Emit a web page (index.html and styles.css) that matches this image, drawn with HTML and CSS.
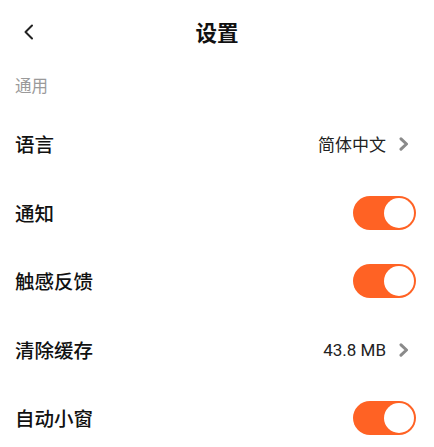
FILE: index.html
```html
<!DOCTYPE html>
<html lang="zh-CN">
<head>
<meta charset="utf-8">
<link rel="stylesheet" href="styles.css">
</head>
<body>
<div class="page">
  <header class="topbar">
    <button class="back" aria-label="返回">
      <svg width="12" height="16" viewBox="0 0 12 16"><polyline points="9,1.5 2.5,8 9,14.5" fill="none" stroke="#222" stroke-width="2" stroke-linecap="round" stroke-linejoin="round"/></svg>
    </button>
    <h1 class="title">设置</h1>
    <span class="spacer"></span>
  </header>
  <div class="section-label">通用</div>
  <div class="list">
    <div class="row">
      <span class="label">语言</span>
      <span class="value">简体中文<svg class="chev" width="12" height="14" viewBox="0 0 12 14"><polyline points="3,1.8 8.5,7 3,12.2" fill="none" stroke="#8a8a8a" stroke-width="3" stroke-linecap="round" stroke-linejoin="round"/></svg></span>
    </div>
    <div class="row">
      <span class="label">通知</span>
      <span class="toggle on"><span class="knob"></span></span>
    </div>
    <div class="row">
      <span class="label">触感反馈</span>
      <span class="toggle on"><span class="knob"></span></span>
    </div>
    <div class="row">
      <span class="label">清除缓存</span>
      <span class="value num">43.8 MB<svg class="chev" width="12" height="14" viewBox="0 0 12 14"><polyline points="3,1.8 8.5,7 3,12.2" fill="none" stroke="#8a8a8a" stroke-width="3" stroke-linecap="round" stroke-linejoin="round"/></svg></span>
    </div>
    <div class="row">
      <span class="label">自动小窗</span>
      <span class="toggle on"><span class="knob"></span></span>
    </div>
  </div>
</div>
</body>
</html>
```
FILE: styles.css
```css
* { box-sizing: border-box; }
html, body {
  margin: 0;
  padding: 0;
  background: #fff;
}
body {
  font-family: "Noto Sans CJK SC", "Noto Sans", sans-serif;
  color: #1a1a1a;
}
.page {
  width: 434px;
  height: 447px;
  overflow: hidden;
}
.topbar {
  height: 64px;
  display: flex;
  align-items: center;
  padding: 0 18px 0 22px;
}
.back {
  width: 40px;
  height: 40px;
  border: 0;
  background: none;
  padding: 0;
  display: flex;
  align-items: center;
  justify-content: flex-start;
}
.back svg { display: block; margin-left: 1px; }
.title {
  flex: 1;
  margin: 0;
  text-align: center;
  font-size: 21.5px;
  font-weight: 700;
  line-height: 28px;
  color: #111;
  padding-right: 4px;
}
.spacer { width: 40px; }
.section-label {
  margin: 10px 0 14px 15px;
  font-size: 16.5px;
  line-height: 22px;
  color: #9a9a9a;
}
.list {
  display: flex;
  flex-direction: column;
}
.row {
  height: 68.5px;
  display: flex;
  align-items: center;
  justify-content: space-between;
  padding: 0 18px 0 15px;
}
.label {
  font-size: 19.5px;
  font-weight: 500;
  color: #111;
  line-height: 26px;
}
.value {
  display: flex;
  align-items: center;
  font-size: 17px;
  color: #222;
  line-height: 22px;
}
.value.num {
  font-family: "Roboto", "Noto Sans", sans-serif;
  font-size: 17px;
}
.chev {
  display: block;
  margin-left: 12px;
  margin-right: 6px;
}
.toggle {
  width: 63px;
  height: 34px;
  border-radius: 17px;
  background: #ff6224;
  display: flex;
  align-items: center;
  justify-content: flex-end;
  padding: 2px;
}
.knob {
  width: 30px;
  height: 30px;
  border-radius: 50%;
  background: #fff;
}
```
